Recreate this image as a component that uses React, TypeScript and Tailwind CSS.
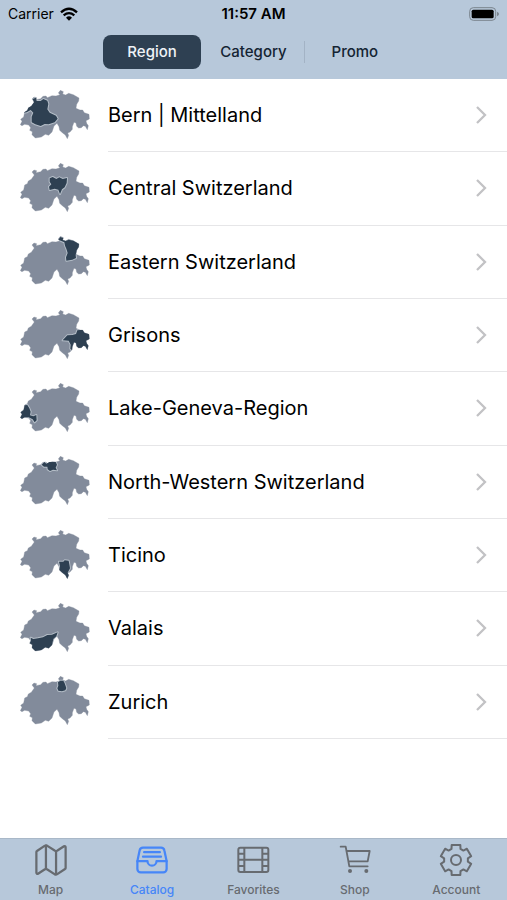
import { useId, useState } from "react"
import type { ComponentType } from "react"
import { IoFileTrayFullOutline, IoMapOutline } from "react-icons/io5"

const SEGMENTS = ["Region", "Category", "Promo"]

const COUNTRY_PATH =
  "M31 128L36 118L32 112L41 105L44 90L52 86L55 78L64 73L73 60L66 51L72 45L80 47L78 53L92 50L99 43L108 42L112 47L126 41L138 42L150 38L145 33L151 25L160 29L158 36L167 39L176 34L190 38L207 48L206 57L200 67L198 79L210 84L218 84L223 92L237 97L238 111L228 116L230 124L235 131L232 143L226 133L220 131L214 137L206 138L200 133L198 123L192 121L187 134L187 142L180 150L173 153L176 160L172 170L166 159L157 152L149 145L147 134L141 124L132 132L126 150L116 160L106 157L94 165L76 168L66 158L67 149L59 145L62 137L56 129L44 127L36 131Z"

interface Region {
  name: string
  path: string
}

const REGIONS: Region[] = [
  {
    name: "Bern | Mittelland",
    path: "M41 92L52 85L55 77L64 72L72 61L68 51L78 47L80 57L92 57L100 51L112 56L115 66L112 82L119 92L138 101L143 110L134 121L116 127L104 126L92 132L76 127L65 121L65 104L70 92L62 84L50 91Z",
  },
  {
    name: "Central Switzerland",
    path: "M119 70L128 66L139 72L148 67L158 72L171 69L170 84L164 97L156 103L150 117L145 104L134 101L119 105L117 95L124 88L119 80Z",
  },
  {
    name: "Eastern Switzerland",
    path: "M145 35L151 27L160 30L158 36L167 39L176 35L190 38L207 48L206 57L200 67L197 81L198 90L187 95L169 98L168 88L173 75L169 62L165 53L163 43L154 39Z",
  },
  {
    name: "Grisons",
    path: "M158 115L172 100L187 99L198 96L202 85L210 84L218 84L223 92L237 97L238 111L228 116L230 124L235 131L232 143L226 133L220 131L214 137L206 138L200 133L198 123L192 121L187 134L185 145L181 140L182 128L176 116Z",
  },
  {
    name: "Lake-Geneva-Region",
    path: "M31 128L36 118L32 112L41 105L44 91L52 90L58 100L62 110L60 121L70 124L79 120L80 136L74 142L68 133L56 127L44 127L36 131Z",
  },
  {
    name: "North-Western Switzerland",
    path: "M95 50L103 42L109 47L118 42L137 42L141 50L137 59L141 67L129 65L120 69L113 64L112 56L102 56Z",
  },
  {
    name: "Ticino",
    path: "M147 119L160 119L164 115L176 116L178 127L180 139L173 152L176 160L172 170L166 159L157 152L148 144L150 132Z",
  },
  {
    name: "Valais",
    path: "M62 128L70 132L84 130L99 127L112 120L126 119L143 112L139 124L130 132L126 150L116 160L106 157L94 165L76 168L66 158L67 149L59 145L63 137Z",
  },
  {
    name: "Zurich",
    path: "M144 43L151 38L160 38L164 46L169 60L166 67L156 70L145 68L142 61L145 53Z",
  },
]

function FilmIcon({ size = 36 }: { size?: number }) {
  return (
    <svg viewBox="0 0 108 108" width={size} height={size} fill="none" stroke="currentColor" strokeWidth="6" aria-hidden="true">
      <rect x="10" y="17" width="90" height="73" rx="6" />
      <path d="M28 17V90M82 17V90M28 53.5H82M10 35H28M10 53.5H28M10 72H28M82 35H100M82 53.5H100M82 72H100" />
    </svg>
  )
}

function CartIcon({ size = 36 }: { size?: number }) {
  return (
    <svg viewBox="0 0 108 108" width={size} height={size} fill="none" stroke="currentColor" strokeWidth="5.5" strokeLinecap="round" strokeLinejoin="round" aria-hidden="true">
      <path d="M11 14H26L37 73H92M28 27H98L92 58H34" />
      <circle cx="39" cy="87" r="6" fill="currentColor" stroke="none" />
      <circle cx="88" cy="87" r="6" fill="currentColor" stroke="none" />
    </svg>
  )
}

// Six teeth, each with two base points and two tip points
const GEAR_POINTS = [0, 60, 120, 180, 240, 300]
  .flatMap((angle) => [
    [angle - 22, 36],
    [angle - 16, 47],
    [angle + 16, 47],
    [angle + 22, 36],
  ])
  .map(([angle, radius]) => {
    const rad = (angle * Math.PI) / 180
    return `${(54 + radius * Math.sin(rad)).toFixed(1)},${(54 - radius * Math.cos(rad)).toFixed(1)}`
  })
  .join(" ")

function GearIcon({ size = 36 }: { size?: number }) {
  return (
    <svg viewBox="0 0 108 108" width={size} height={size} fill="none" stroke="currentColor" strokeWidth="6" strokeLinejoin="round" aria-hidden="true">
      <polygon points={GEAR_POINTS} />
      <circle cx="54" cy="54" r="15" />
    </svg>
  )
}

const TABS: { label: string; icon: ComponentType<{ size?: number }> }[] = [
  { label: "Map", icon: IoMapOutline },
  { label: "Catalog", icon: IoFileTrayFullOutline },
  { label: "Favorites", icon: FilmIcon },
  { label: "Shop", icon: CartIcon },
  { label: "Account", icon: GearIcon },
]

function WifiIcon() {
  return (
    <svg viewBox="0 0 54 42" className="h-3.5 w-[18px]" aria-hidden="true">
      <path d="M27 41L18 32Q27 24 36 32Z" />
      <path d="M11 25Q27 12 43 25M3 16Q27 -6 51 16" fill="none" stroke="black" strokeWidth="7" />
    </svg>
  )
}

function BatteryIcon() {
  return (
    <svg viewBox="0 0 90 42" className="h-3.5 w-[30px]" aria-hidden="true">
      <rect x="2" y="2" width="78" height="38" rx="11" fill="none" stroke="#7b858f" strokeWidth="3" />
      <rect x="8" y="8" width="66" height="26" rx="5" />
      <path d="M84 14Q90 17 90 21Q90 25 84 28Z" fill="#7b858f" />
    </svg>
  )
}

function RegionMap({ path }: { path: string }) {
  const clipId = useId()

  return (
    <svg viewBox="30 24 210 150" className="mb-0.5 h-[50px] w-[70px]" aria-hidden="true">
      <clipPath id={clipId}>
        <path d={COUNTRY_PATH} />
      </clipPath>
      <path d={COUNTRY_PATH} fill="#828b9b" stroke="#828b9b" strokeWidth="1" strokeLinejoin="round" />
      <path
        d={path}
        clipPath={`url(#${clipId})`}
        fill="none"
        stroke="#b4bdc7"
        strokeWidth="6"
        strokeLinejoin="round"
      />
      <path d={path} fill="#2e4052" />
    </svg>
  )
}

function Chevron() {
  return (
    <svg viewBox="0 0 12 20" className="h-5 w-3" fill="none" aria-hidden="true">
      <path d="M2 2L10 10L2 18" stroke="#c2c2c5" strokeWidth="2.3" />
    </svg>
  )
}

export default function App() {
  const [segment, setSegment] = useState("Region")
  const [tab, setTab] = useState("Catalog")

  return (
    <div className="flex min-h-screen flex-col bg-white font-[Inter,sans-serif] text-black">
      <header className="bg-[#b7c8da] pb-2">
        {/* Status bar */}
        <div className="grid h-7 grid-cols-3 items-center px-2">
          <div className="flex items-center gap-1.5 text-sm">
            <span>Carrier</span>
            <WifiIcon />
          </div>
          <span className="text-center text-[15px] font-semibold">11:57 AM</span>
          <div className="flex justify-end">
            <BatteryIcon />
          </div>
        </div>

        {/* Segmented control */}
        <div className="mx-auto mt-[5px] grid w-3/5 grid-cols-3">
          {SEGMENTS.map((name) => (
            <div key={name} className="relative p-0.5">
              <button
                type="button"
                aria-pressed={segment === name}
                onClick={() => setSegment(name)}
                className={
                  segment === name
                    ? "block h-[34px] w-full rounded-lg bg-[#2e4052] text-[15px] font-medium text-[#eef3f7]"
                    : "block h-[34px] w-full rounded-lg text-[15px] font-medium text-[#142433]"
                }
              >
                {name}
              </button>
              {name === "Promo" && (
                <span className="absolute inset-y-2 left-0 w-px bg-[#a3b3c5]" />
              )}
            </div>
          ))}
        </div>
      </header>

      <main className="flex-1">
        <ul className="grid h-[660px] auto-rows-fr">
          {REGIONS.map((region) => (
            <li key={region.name}>
              <a href="#" className="flex h-full items-center pl-5">
                <RegionMap path={region.path} />
                <span className="ml-[18px] flex h-full flex-1 items-center justify-between border-b border-[#e6e6e8] pr-5 text-xl">
                  {region.name}
                  <Chevron />
                </span>
              </a>
            </li>
          ))}
        </ul>
      </main>

      <nav className="grid h-[62px] grid-cols-5 border-t border-[#a9b8c8] bg-[#b7c8da]">
        {TABS.map(({ label, icon: Icon }) => (
          <button
            key={label}
            type="button"
            aria-current={tab === label ? "page" : undefined}
            onClick={() => setTab(label)}
            className={
              tab === label
                ? "flex flex-col items-center pt-[3px] text-xs font-medium text-[#4686f8]"
                : "flex flex-col items-center pt-[3px] text-xs font-medium text-[#676b70]"
            }
          >
            <Icon size={36} />
            <span className="mt-1">{label}</span>
          </button>
        ))}
      </nav>
    </div>
  )
}
